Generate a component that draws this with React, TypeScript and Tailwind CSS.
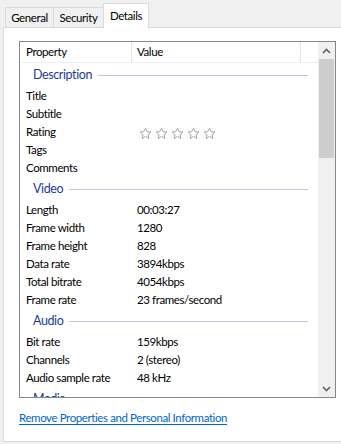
import React from "react"

type Row = { label: string; value?: string; stars?: boolean }
type Group = { title: string; rows: Row[] }

const groups: Group[] = [
    {
        title: "Description",
        rows: [
            { label: "Title" },
            { label: "Subtitle" },
            { label: "Rating", stars: true },
            { label: "Tags" },
            { label: "Comments" },
        ],
    },
    {
        title: "Video",
        rows: [
            { label: "Length", value: "00:03:27" },
            { label: "Frame width", value: "1280" },
            { label: "Frame height", value: "828" },
            { label: "Data rate", value: "3894kbps" },
            { label: "Total bitrate", value: "4054kbps" },
            { label: "Frame rate", value: "23 frames/second" },
        ],
    },
    {
        title: "Audio",
        rows: [
            { label: "Bit rate", value: "159kbps" },
            { label: "Channels", value: "2 (stereo)" },
            { label: "Audio sample rate", value: "48 kHz" },
        ],
    },
    { title: "Media", rows: [] },
]

const Star = () => (
    <svg width="13" height="13" viewBox="0 0 13 13">
        <path
            d="M6.5 1 L8.1 4.6 L12 5 L9.1 7.6 L9.9 11.5 L6.5 9.5 L3.1 11.5 L3.9 7.6 L1 5 L4.9 4.6 Z"
            fill="white"
            stroke="#a6a6a6"
            strokeWidth="1"
            strokeLinejoin="round"
        />
    </svg>
)

const Chevron = ({ up }: { up?: boolean }) => (
    <svg width="9" height="6" viewBox="0 0 9 6">
        <path d={up ? "M1 5 L4.5 1.5 L8 5" : "M1 1 L4.5 4.5 L8 1"} fill="none" stroke="#606060" strokeWidth="1.6" />
    </svg>
)

const Tab = ({ label, active, w }: { label: string; active?: boolean; w: string }) =>
    active ? (
        <div className={`${w} h-[25px] -mb-px flex items-center justify-center bg-white border border-b-0 border-[#d9d9d9] relative z-10`}>
            {label}
        </div>
    ) : (
        <div className={`${w} h-[20px] flex items-center justify-center bg-[#f0f0f0] border border-b-0 border-[#d9d9d9] -mr-px`}>
            {label}
        </div>
    )

export default function App() {
    return (
        <div
            className="w-[341px] h-[444px] overflow-hidden bg-[#f0f0f0] text-[11.5px] tracking-[-0.4px] text-black"
            style={{ fontFamily: 'Lato, "Noto Sans", sans-serif' }}
        >
            <div className="flex items-end pl-[5px] pt-[2px] h-[27px]">
                <Tab label="General" w="w-[49px]" />
                <Tab label="Security" w="w-[51px]" />
                <Tab label="Details" w="w-[46px]" active />
            </div>
            <div className="ml-[3px] w-[345px] h-[415px] bg-white border border-[#d9d9d9] pt-[13px] pl-[15px]">
                <div className="w-[317px] h-[357px] border border-[#828790] flex">
                    <div className="flex-1 overflow-hidden">
                        <div className="h-[21px] flex border-b border-[#eaeef5]">
                            <div className="w-[112px] pl-[6px] flex items-center border-r border-[#e5e5e5]">Property</div>
                            <div className="w-[169px] pl-[5px] flex items-center border-r border-[#e5e5e5]">Value</div>
                        </div>
                        {groups.map((g) => (
                            <div key={g.title}>
                                <div className="h-[24px] flex items-center pl-[13px] pr-[10px]">
                                    <span className="text-[#1e3c96] text-[12.5px]">{g.title}</span>
                                    <div className="flex-1 h-px bg-[#b9c8dc] ml-[6px]" />
                                </div>
                                {g.rows.map((r) => (
                                    <div key={r.label} className="h-[18px] flex items-center">
                                        <div className="w-[111px] pl-[6px] whitespace-nowrap">{r.label}</div>
                                        {r.stars ? (
                                            <div className="flex gap-[3px] pl-[8px] pt-[3px]">
                                                <Star />
                                                <Star />
                                                <Star />
                                                <Star />
                                                <Star />
                                            </div>
                                        ) : (
                                            <div className="pl-[6px] whitespace-nowrap">{r.value}</div>
                                        )}
                                    </div>
                                ))}
                            </div>
                        ))}
                    </div>
                    <div className="w-[17px] bg-[#f0f0f0] flex flex-col">
                        <div className="h-[17px] flex items-center justify-center">
                            <Chevron up />
                        </div>
                        <div className="h-[99px] mx-[1px] bg-[#cdcdcd]" />
                        <div className="flex-1" />
                        <div className="h-[17px] flex items-center justify-center">
                            <Chevron />
                        </div>
                    </div>
                </div>
                <div className="mt-[11px] text-[#0066cc] underline underline-offset-2">
                    Remove Properties and Personal Information
                </div>
            </div>
        </div>
    )
}
